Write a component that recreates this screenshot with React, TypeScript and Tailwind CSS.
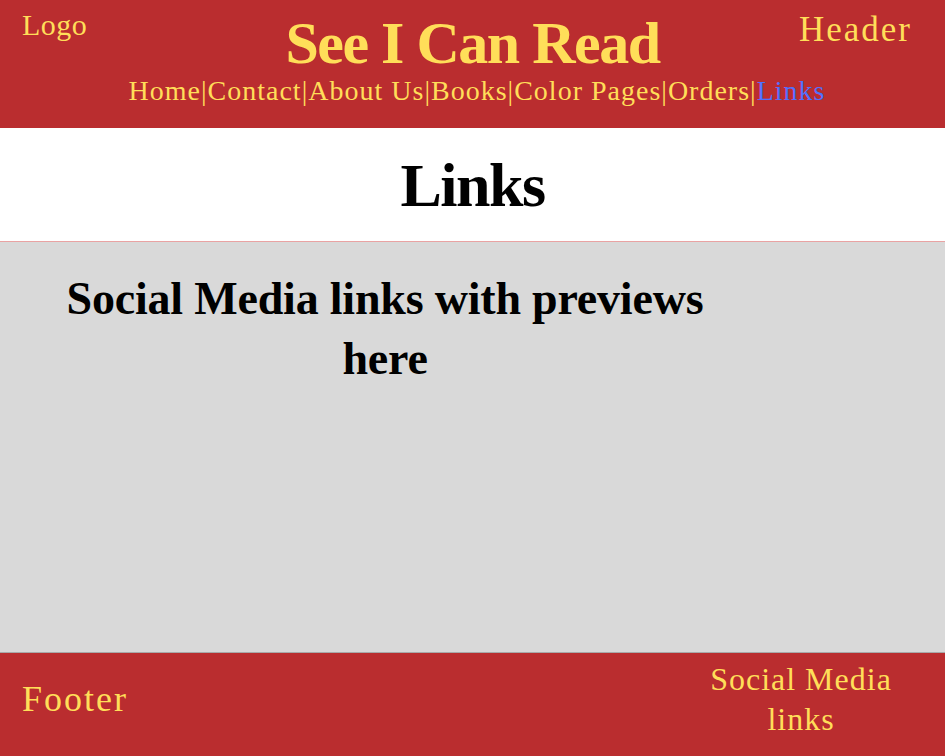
export default function App() {
  const nav = ["Home", "Contact", "About Us", "Books", "Color Pages", "Orders"];
  return (
    <div className="w-[945px] h-[756px] flex flex-col font-['Liberation_Serif',serif] overflow-hidden">
      {/* Header */}
      <header className="h-[128px] bg-[#ba2d2f] flex flex-col text-[#ffde59]">
        <div className="flex items-start justify-between">
          <div className="pl-[22px] pt-[10px] text-[30px] leading-none tracking-[0.5px] w-[150px]">Logo</div>
          <h1 className="pt-[13px] text-[60px] font-bold leading-none tracking-[-1.5px] whitespace-nowrap">
            See I Can Read
          </h1>
          <div className="pr-[33px] pt-[12px] text-[35px] leading-none tracking-[2px] w-[150px] text-right">
            Header
          </div>
        </div>
        <nav className="mt-[4px] pl-[9px] text-center text-[28px] leading-none tracking-[1px] whitespace-nowrap">
          {nav.map((item) => (
            <span key={item}>
              {item}|
            </span>
          ))}
          <span className="text-[#5170ff]">Links</span>
        </nav>
      </header>

      {/* Page title */}
      <section className="h-[114px] bg-white border-b border-[#e9a3a3] flex items-center justify-center">
        <h2 className="text-[62px] font-bold leading-none tracking-[-1.5px] text-black">Links</h2>
      </section>

      {/* Content */}
      <main className="flex-1 bg-[#d9d9d9] border-b border-[#a9a9a9] pl-[65px] pt-[27px]">
        <p className="w-[640px] text-center text-[46px] font-bold leading-[60px] tracking-[-0.2px] text-black">
          Social Media links with previews here
        </p>
      </main>

      {/* Footer */}
      <footer className="h-[103px] bg-[#ba2d2f] flex items-start justify-between text-[#ffde59]">
        <div className="pl-[22px] pt-[28px] text-[36px] leading-none tracking-[2px]">Footer</div>
        <div className="w-[240px] mr-[24px] pt-[6px] text-center text-[32px] leading-[40px] tracking-[1px]">
          Social Media
          <br />
          links
        </div>
      </footer>
    </div>
  );
}
